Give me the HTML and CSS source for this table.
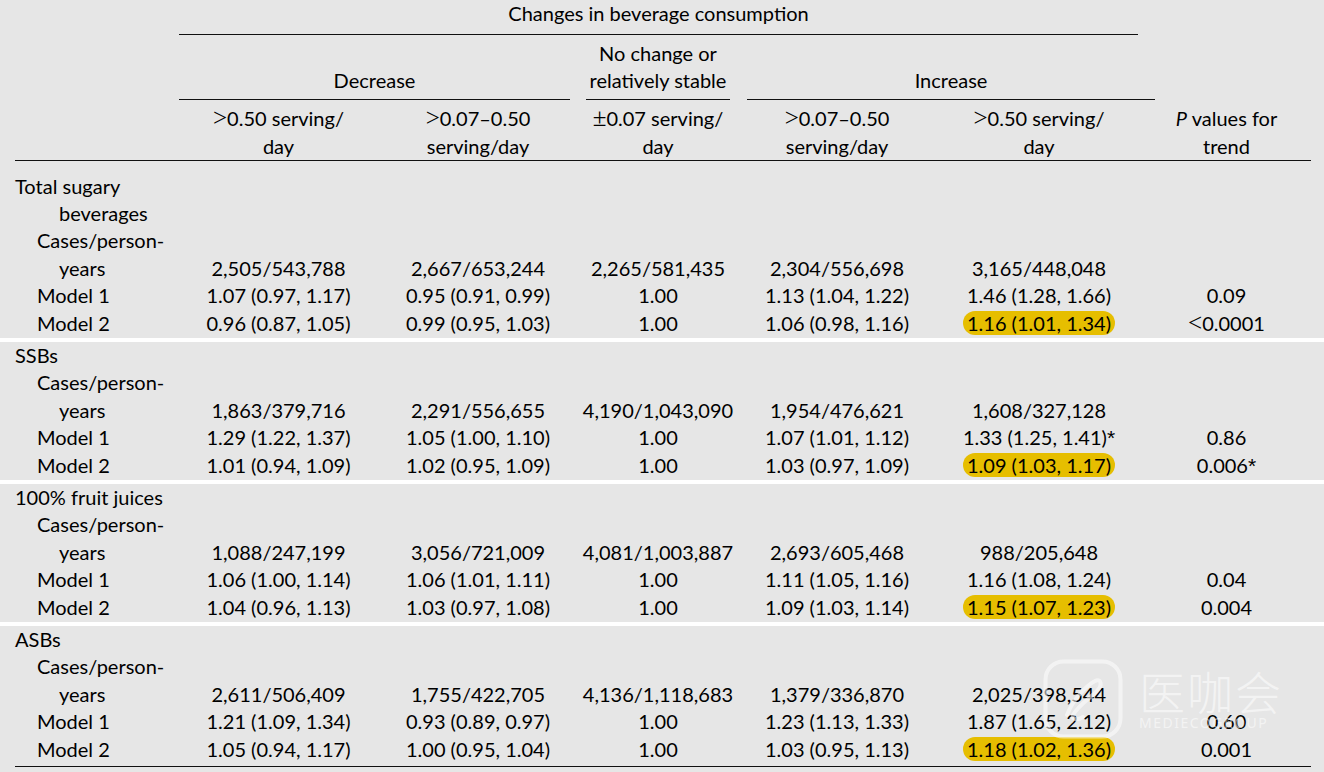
FILE: index.html
```html
<!DOCTYPE html>
<html>
<head>
<meta charset="utf-8">
<title>Changes in beverage consumption</title>
<link rel="stylesheet" href="styles.css">
</head>
<body>
<div class="table">
  <div class="row r1">
    <div class="main-head">Changes in beverage consumption</div>
  </div>
  <div class="row r2">
    <div class="grp g-dec">Decrease</div>
    <div class="grp g-no">No change or<br>relatively stable</div>
    <div class="grp g-inc">Increase</div>
  </div>
  <div class="row r3">
    <div></div>
    <div><span class="sym">&gt;</span>0.50 serving/<br>day</div>
    <div><span class="sym">&gt;</span>0.07–0.50<br>serving/day</div>
    <div><span class="sym">±</span>0.07 serving/<br>day</div>
    <div><span class="sym">&gt;</span>0.07–0.50<br>serving/day</div>
    <div><span class="sym">&gt;</span>0.50 serving/<br>day</div>
    <div><i>P</i> values for<br>trend</div>
  </div>

  <div class="sec first">
    <div class="row"><div class="lbl grp-lbl">Total sugary<br>beverages</div></div>
    <div class="row"><div class="lbl sub">Cases/person-<br>years</div><div>2,505/543,788</div><div>2,667/653,244</div><div>2,265/581,435</div><div>2,304/556,698</div><div>3,165/448,048</div><div></div></div>
    <div class="row"><div class="lbl model">Model 1</div><div>1.07 (0.97, 1.17)</div><div>0.95 (0.91, 0.99)</div><div>1.00</div><div>1.13 (1.04, 1.22)</div><div>1.46 (1.28, 1.66)</div><div>0.09</div></div>
    <div class="row"><div class="lbl model">Model 2</div><div>0.96 (0.87, 1.05)</div><div>0.99 (0.95, 1.03)</div><div>1.00</div><div>1.06 (0.98, 1.16)</div><div><span class="hl">1.16 (1.01, 1.34)</span></div><div><span class="sym">&lt;</span>0.0001</div></div>
  </div>
  <div class="band"></div>

  <div class="sec">
    <div class="row"><div class="lbl grp-lbl">SSBs</div></div>
    <div class="row"><div class="lbl sub">Cases/person-<br>years</div><div>1,863/379,716</div><div>2,291/556,655</div><div>4,190/1,043,090</div><div>1,954/476,621</div><div>1,608/327,128</div><div></div></div>
    <div class="row"><div class="lbl model">Model 1</div><div>1.29 (1.22, 1.37)</div><div>1.05 (1.00, 1.10)</div><div>1.00</div><div>1.07 (1.01, 1.12)</div><div>1.33 (1.25, 1.41)<span class="ast">*</span></div><div>0.86</div></div>
    <div class="row"><div class="lbl model">Model 2</div><div>1.01 (0.94, 1.09)</div><div>1.02 (0.95, 1.09)</div><div>1.00</div><div>1.03 (0.97, 1.09)</div><div><span class="hl">1.09 (1.03, 1.17)</span></div><div>0.006<span class="ast">*</span></div></div>
  </div>
  <div class="band"></div>

  <div class="sec">
    <div class="row"><div class="lbl grp-lbl">100% fruit juices</div></div>
    <div class="row"><div class="lbl sub">Cases/person-<br>years</div><div>1,088/247,199</div><div>3,056/721,009</div><div>4,081/1,003,887</div><div>2,693/605,468</div><div>988/205,648</div><div></div></div>
    <div class="row"><div class="lbl model">Model 1</div><div>1.06 (1.00, 1.14)</div><div>1.06 (1.01, 1.11)</div><div>1.00</div><div>1.11 (1.05, 1.16)</div><div>1.16 (1.08, 1.24)</div><div>0.04</div></div>
    <div class="row"><div class="lbl model">Model 2</div><div>1.04 (0.96, 1.13)</div><div>1.03 (0.97, 1.08)</div><div>1.00</div><div>1.09 (1.03, 1.14)</div><div><span class="hl">1.15 (1.07, 1.23)</span></div><div>0.004</div></div>
  </div>
  <div class="band"></div>

  <div class="sec last">
    <div class="row"><div class="lbl grp-lbl">ASBs</div></div>
    <div class="row"><div class="lbl sub">Cases/person-<br>years</div><div>2,611/506,409</div><div>1,755/422,705</div><div>4,136/1,118,683</div><div>1,379/336,870</div><div>2,025/398,544</div><div></div></div>
    <div class="row"><div class="lbl model">Model 1</div><div>1.21 (1.09, 1.34)</div><div>0.93 (0.89, 0.97)</div><div>1.00</div><div>1.23 (1.13, 1.33)</div><div>1.87 (1.65, 2.12)</div><div>0.60</div></div>
    <div class="row"><div class="lbl model">Model 2</div><div>1.05 (0.94, 1.17)</div><div>1.00 (0.95, 1.04)</div><div>1.00</div><div>1.03 (0.95, 1.13)</div><div><span class="hl">1.18 (1.02, 1.36)</span></div><div>0.001</div></div>
  </div>
</div>

<div class="watermark">
  <svg class="wm-icon" width="80" height="80" viewBox="0 0 80 80" aria-hidden="true">
    <rect x="2.5" y="2.5" width="75" height="75" rx="18" ry="18" fill="none" stroke="#fff" stroke-width="4"/>
    <path d="M24 56 C 30 40, 44 26, 52 22 C 58 19, 60 26, 54 32 C 46 40, 36 46, 30 56 C 28 60, 34 62, 40 58" fill="none" stroke="#fff" stroke-width="4" stroke-linecap="round"/>
  </svg>
  <div class="wm-text">
    <div class="wm-cn">医咖会</div>
    <div class="wm-en">MEDIECOGROUP</div>
  </div>
</div>
</body>
</html>
```

FILE: styles.css
```css
* { box-sizing: border-box; }
html, body { margin: 0; padding: 0; }
body {
  width: 1324px;
  height: 772px;
  overflow: hidden;
  position: relative;
  background: #e6e6e6;
  color: #000;
  font-family: Lato, "Noto Sans", sans-serif;
  font-size: 20px;
  line-height: 27.4px;
}
.table { margin: 0 13px 0 15px; }
.row {
  display: grid;
  grid-template-columns: 164px 199px 200px 160px 198px 206px 169px;
  align-items: end;
  text-align: center;
  white-space: nowrap;
}
.sym {
  font-family: "Liberation Serif", serif;
  font-size: 25px;
  line-height: 0;
  font-weight: 300;
}
.ast {
  font-family: "Liberation Sans", sans-serif;
  font-size: 21px;
  line-height: 0;
}

.r1 { padding-top: 0; }
.main-head {
  grid-column: 2 / 7;
  margin-right: 4px;
  padding-bottom: 6.2px;
  border-bottom: 1px solid #111;
}
.r2 { padding-top: 5px; }
.grp { padding-bottom: 5px; border-bottom: 1px solid #111; }
.g-dec { grid-column: 2 / 4; margin-right: 8px; }
.g-no { grid-column: 4 / 5; margin: 0 8px; }
.g-inc { grid-column: 5 / 7; margin-left: 9px; margin-right: -13px; }
.r3 { padding-top: 5px; border-bottom: 1px solid #111; }

.sec.first { padding-top: 11.3px; }
.sec.last { padding-bottom: 2.5px; border-bottom: 1px solid #111; }
.band {
  margin: 1px -13px 0 -15px;
  height: 4px;
  background: #fff;
}

.lbl { text-align: left; grid-column: 1; }
.grp-lbl { padding-left: 44px; text-indent: -44px; }
.sub { padding-left: 44px; text-indent: -22px; }
.model { padding-left: 22px; }

.hl {
  background: #e6be00;
  border-radius: 12px;
  padding: 0 4px;
}

.watermark {
  position: absolute;
  left: 1043px;
  top: 659px;
  display: flex;
  align-items: flex-start;
  gap: 16px;
  opacity: 0.55;
  color: #fff;
}
.wm-icon { display: block; }
.wm-text { display: flex; flex-direction: column; align-items: flex-start; padding-top: 6px; }
.wm-cn {
  font-family: "Noto Sans CJK SC", sans-serif;
  font-weight: 300;
  font-size: 46px;
  line-height: 50px;
  letter-spacing: 2px;
}
.wm-en {
  font-family: "Noto Sans", sans-serif;
  font-size: 14px;
  line-height: 16px;
  letter-spacing: 1.5px;
}
```
